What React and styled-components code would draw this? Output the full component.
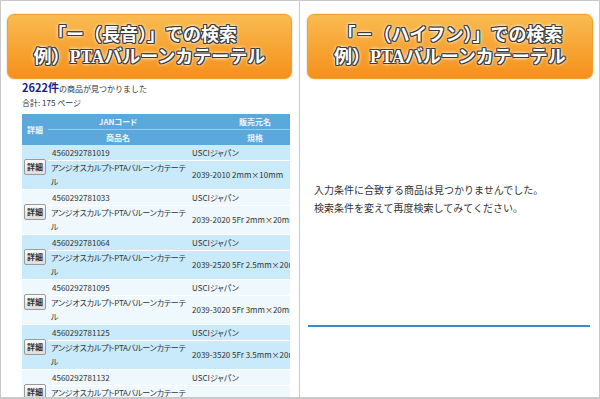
import React from "react";
import styled, { createGlobalStyle } from "styled-components";

const GlobalStyle = createGlobalStyle`
  html, body {
    margin: 0;
    padding: 0;
    background: #fff;
  }
  body {
    font-family: "Noto Sans CJK JP", "Noto Sans", sans-serif;
    color: #333;
  }
`;

const Frame = styled.div`
  width: 600px;
  height: 399px;
  box-sizing: border-box;
  border: 1px solid #c9c9c9;
  border-bottom-width: 2px;
  display: grid;
  grid-template-columns: 299px 1fr;
  overflow: hidden;
`;

const Panel = styled.section`
  box-sizing: border-box;
  height: 100%;
  padding: 13px ${(p) => (p.$left ? "7px" : "6px")} 0 ${(p) => (p.$left ? "6px" : "7px")};
  border-right: ${(p) => (p.$left ? "1px solid #c9c9c9" : "none")};
  overflow: hidden;
  display: flex;
  flex-direction: column;
`;

const Banner = styled.div`
  flex-shrink: 0;
  height: 65px;
  box-sizing: border-box;
  border: 1px solid #f2a02c;
  border-radius: 7px;
  background: linear-gradient(to bottom, #f9bb50 0%, #f7a535 50%, #f5911b 100%);
  box-shadow: 0 0 2px rgba(0, 0, 0, 0.25);
  display: flex;
  flex-direction: column;
  align-items: center;
  justify-content: center;
  color: #fff;
  font-family: "Liberation Serif", "Noto Sans CJK JP", serif;
  font-weight: 700;
  font-size: 18px;
  line-height: 22px;
  padding-bottom: 2px;
  text-shadow: 1px 0 0 #3a3a3a, -1px 0 0 #3a3a3a, 0 1px 0 #3a3a3a, 0 -1px 0 #3a3a3a,
    1px 1px 0 #3a3a3a, -1px -1px 0 #3a3a3a, 1px -1px 0 #3a3a3a, -1px 1px 0 #3a3a3a,
    0 0 4px #fff, 0 0 4px #fff, 0 0 3px #fff;
`;

const BannerLine = styled.span`
  display: block;
  white-space: nowrap;
  margin-left: ${(p) => p.$shift || 0}px;
`;

const Body = styled.div`
  flex-shrink: 0;
  padding: 0 0 0 15px;
  display: flex;
  flex-direction: column;
`;

const Count = styled.div`
  margin-top: 1px;
  font-size: 8px;
  line-height: 14px;
  color: #333;
`;

const CountNum = styled.strong`
  font-size: 11px;
  color: #1b1f8a;
  font-weight: 700;
`;

const Pages = styled.div`
  font-size: 8px;
  line-height: 14px;
  margin-bottom: 4px;
`;

const TableClip = styled.div`
  width: 268px;
  overflow: hidden;
`;

const Table = styled.table`
  width: 300px;
  border-collapse: collapse;
  table-layout: fixed;
  font-size: 8px;
  font-feature-settings: "palt";
`;

const Th = styled.th`
  background: #5ba8dc;
  color: #eaf4fb;
  font-weight: 700;
  font-size: 8px;
  height: ${(p) => (p.$h ? `${p.$h}px` : "auto")};
  padding: 0;
  text-align: center;
  border-top: ${(p) => (p.$line ? "1px solid #9acbec" : "none")};
`;

const Item = styled.tbody`
  background: ${(p) => (p.$odd ? "#c8eafa" : "#eef8fd")};
  border-bottom: 1px solid #fff;
`;

const Td = styled.td`
  padding: 0 ${(p) => (p.$tight ? "0 0 3px" : "4px")};
  color: #333;
  letter-spacing: ${(p) => (p.$tight ? "-0.2px" : "0")};
  line-height: ${(p) => (p.$tall ? "14px" : "15px")};
  height: ${(p) => (p.$tall ? "28px" : "15px")};
  white-space: ${(p) => (p.$nowrap ? "nowrap" : "normal")};
  border-top: ${(p) => (p.$line ? "1px solid #fff" : "none")};
  text-align: ${(p) => (p.$center ? "center" : "left")};
`;

const DetailButton = styled.button`
  font-family: inherit;
  font-size: 8px;
  font-weight: 700;
  color: #333;
  padding: 0 2px;
  height: 16px;
  width: 22px;
  line-height: 14px;
  border: 1px solid #9a9a9a;
  border-radius: 2px;
  background: linear-gradient(to bottom, #fbfbfb, #dedede);
`;

const Message = styled.div`
  margin: 102px 0 0 7px;
  font-size: 10px;
  line-height: 18px;
  color: #333;
`;

const BlueRule = styled.div`
  margin: 108px 3px 0 1px;
  height: 2px;
  background: #3b86d6;
`;

const items = [
  { jan: "4560292781019", spec: "2039-2010 2mm×10mm" },
  { jan: "4560292781033", spec: "2039-2020 5Fr 2mm×20mm" },
  { jan: "4560292781064", spec: "2039-2520 5Fr 2.5mm×20mm" },
  { jan: "4560292781095", spec: "2039-3020 5Fr 3mm×20mm" },
  { jan: "4560292781125", spec: "2039-3520 5Fr 3.5mm×20mm" },
  { jan: "4560292781132", spec: "2039-4020 5Fr 4mm×20mm" },
];

function ResultTable() {
  return (
    <TableClip>
      <Table>
        <colgroup>
          <col style={{ width: "26px" }} />
          <col style={{ width: "140px" }} />
          <col style={{ width: "134px" }} />
        </colgroup>
        <thead>
          <tr>
            <Th rowSpan={2}>詳細</Th>
            <Th $h={15}>JANコード</Th>
            <Th $h={15}>販売元名</Th>
          </tr>
          <tr>
            <Th $h={15} $line>商品名</Th>
            <Th $h={15} $line>規格</Th>
          </tr>
        </thead>
        {items.map((it, i) => (
          <Item key={it.jan} $odd={i % 2 === 0}>
            <tr>
              <Td rowSpan={2} $center style={{ padding: "0 2px" }}>
                <DetailButton type="button">詳細</DetailButton>
              </Td>
              <Td $nowrap>{it.jan}</Td>
              <Td $nowrap>USCIジャパン</Td>
            </tr>
            <tr>
              <Td $tall $line $tight>アンジオスカルプトPTAバルーンカテーテル</Td>
              <Td $tall $line $nowrap>{it.spec}</Td>
            </tr>
          </Item>
        ))}
      </Table>
    </TableClip>
  );
}

export default function App() {
  return (
    <>
      <GlobalStyle />
      <Frame>
        <Panel $left>
          <Banner>
            <BannerLine $shift={-14}>「ー（長音）」での検索</BannerLine>
            <BannerLine>例）PTAバルーンカテーテル</BannerLine>
          </Banner>
          <Body>
            <Count>
              <CountNum>2622件</CountNum>の商品が見つかりました
            </Count>
            <Pages>合計: 175 ページ</Pages>
            <ResultTable />
          </Body>
        </Panel>
        <Panel>
          <Banner>
            <BannerLine>「－（ハイフン）」での検索</BannerLine>
            <BannerLine>例）PTAバルーンカテーテル</BannerLine>
          </Banner>
          <Message>
            入力条件に合致する商品は見つかりませんでした。
            <br />
            検索条件を変えて再度検索してみてください。
          </Message>
          <BlueRule />
        </Panel>
      </Frame>
    </>
  );
}
